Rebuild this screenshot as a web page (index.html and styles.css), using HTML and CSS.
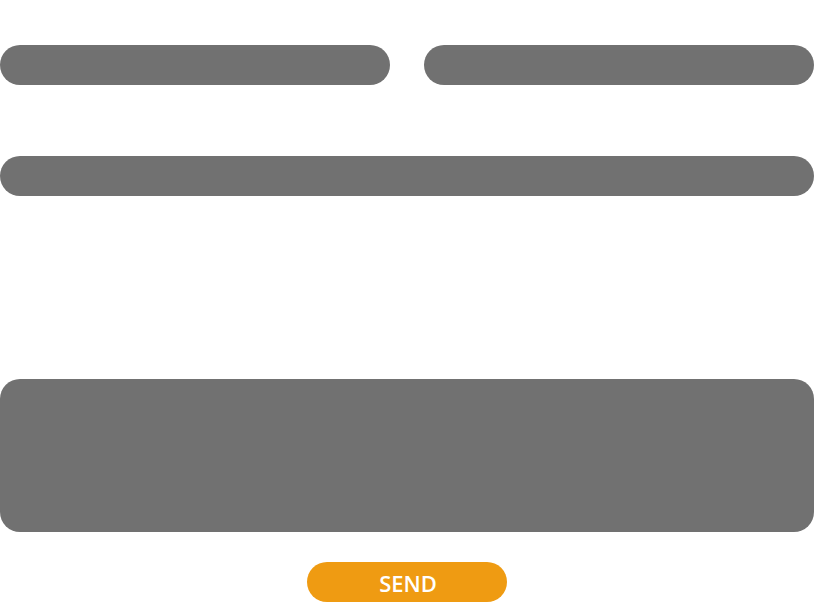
FILE: index.html
```html
<!DOCTYPE html>
<html>
<head>
<meta charset="utf-8">
<link rel="stylesheet" href="styles.css">
</head>
<body>
<form class="form">
  <div class="row">
    <input class="field" type="text">
    <input class="field" type="email">
  </div>
  <input class="field full subject" type="text">
  <textarea class="message"></textarea>
  <div class="actions">
    <button class="send" type="button">SEND</button>
  </div>
</form>
</body>
</html>
```
FILE: styles.css
```css
html, body {
  margin: 0;
  padding: 0;
  background: #ffffff;
}
.form {
  width: 814px;
  padding-top: 45px;
  display: flex;
  flex-direction: column;
}
.row {
  display: flex;
  gap: 34px;
}
.field {
  flex: 1;
  height: 40px;
  border: none;
  border-radius: 20px;
  background: #717171;
  padding: 0;
  margin: 0;
  outline: none;
  box-sizing: border-box;
  min-width: 0;
}
.subject {
  margin-top: 71px;
  width: 814px;
  flex: none;
}
.message {
  margin-top: 183px;
  height: 153px;
  border: none;
  border-radius: 20px;
  background: #717171;
  resize: none;
  padding: 0;
  box-sizing: border-box;
  outline: none;
  display: block;
}
.actions {
  display: flex;
  justify-content: center;
  margin-top: 30px;
}
.send {
  width: 200px;
  height: 40px;
  border: none;
  border-radius: 20px;
  background: #ef9b12;
  color: #ffffff;
  font-family: "Open Sans", sans-serif;
  font-weight: 600;
  font-size: 22px;
  line-height: 40px;
  padding: 1px 0 0 2px;
  box-sizing: border-box;
  cursor: pointer;
}
```
